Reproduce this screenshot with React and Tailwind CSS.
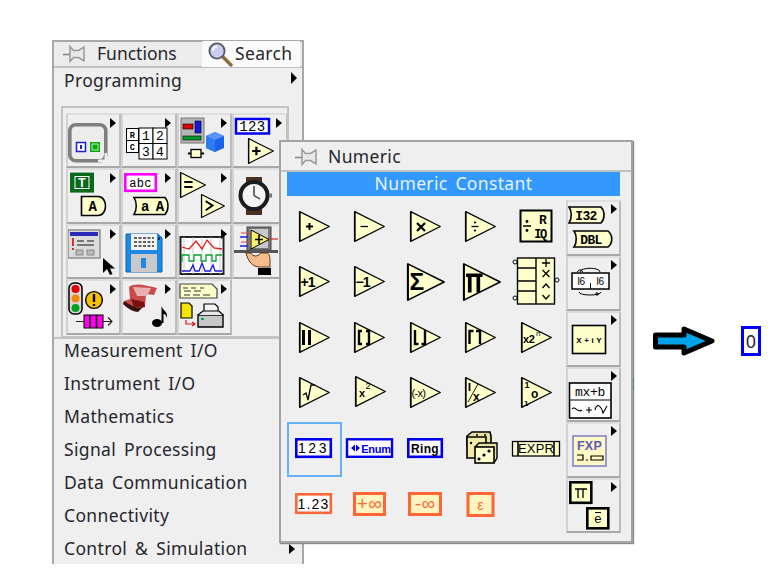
const Y = "#ffffcc";
const K = "#000";
const SANS = "'Liberation Sans', sans-serif";
const MONO = "'Liberation Mono', monospace";

const T = ({ x, y, s = 10, w = 700, f = K, a = "middle", ff = SANS, ls, children }) => (
  <text x={x} y={y} fontSize={s} fontWeight={w} fill={f} textAnchor={a} fontFamily={ff} letterSpacing={ls}>{children}</text>
);

const Pin = () => (
  <svg width="24" height="20" viewBox="0 0 24 20" className="shrink-0">
    <path d="M1 10.5H8" stroke="#8a8a8a" strokeWidth="1.6" />
    <path d="M8 2.5V17.5L11.5 13.5H16.5L22 17V3L16.5 6.5H11.5Z" fill="#e8e8e8" stroke="#9a9a9a" strokeWidth="1.5" />
  </svg>
);

const Glass = () => (
  <svg width="26" height="26" viewBox="0 0 26 26" className="shrink-0">
    <path d="M15 15L24 24" stroke="#8a6a3a" strokeWidth="3.4" strokeLinecap="round" />
    <circle cx="10" cy="10" r="7.6" fill="#c9cdf2" stroke="#55585f" strokeWidth="1.8" />
    <path d="M6 10a4.5 4.5 0 0 1 4-4.5" stroke="#fff" strokeWidth="2" fill="none" />
  </svg>
);

const Tri = ({ x = 12, y = 11, size = 31, children }) => (
  <g transform={`translate(${x} ${y}) scale(${size / 31})`}>
    <path d="M0.7 0.7V30.3L30.3 15.5Z" fill={Y} stroke={K} strokeWidth="1.3" strokeLinejoin="round" />
    <path d="M0.7 0.7V30.3" stroke={K} strokeWidth="1.6" />
    {children}
  </g>
);

const Sub = ({ x = 44, y = 5 }) => <path d={`M${x} ${y}L${x + 6} ${y + 5}L${x} ${y + 10}Z`} fill={K} />;

const Svg = ({ children }) => (
  <svg width="55" height="55" viewBox="0 0 55 55" className="block">{children}</svg>
);

/* ---------- left palette icons ---------- */
const leftIcons = [
  <>
    <rect x="3.8" y="11.8" width="36" height="36" rx="6" fill="#ececec" stroke="#7f7f7f" strokeWidth="3.6" />
    <path d="M39.8 40V47.8H32" stroke="#efefef" strokeWidth="2.5" fill="none" />
    <rect x="10.5" y="29.5" width="9" height="9" fill="#fff" stroke="#1c1cd8" strokeWidth="1.5" />
    <rect x="14" y="32" width="2" height="4" fill="#1c1cd8" />
    <rect x="24" y="29" width="10" height="10" fill="#10a810" />
    <path d="M26 31h6v6h-6z" fill="none" stroke="#b8f0b8" strokeWidth="1" />
  </>,
  <>
    <rect x="5.5" y="15.5" width="12" height="24" fill="#fff" stroke={K} />
    <path d="M5.5 27.5H17.5" stroke={K} />
    <T x="11.5" y="25" s="8.5" ff={MONO}>R</T>
    <T x="11.5" y="37" s="8.5" ff={MONO}>C</T>
    <rect x="18" y="15" width="14" height="15.5" fill="#fff" stroke={K} />
    <rect x="32" y="15" width="14" height="15.5" fill="#fff" stroke={K} />
    <rect x="18" y="30.5" width="14" height="15.5" fill="#fff" stroke={K} />
    <rect x="32" y="30.5" width="14" height="15.5" fill="#fff" stroke={K} />
    <T x="25" y="27" s="13" w="400" ff={MONO}>1</T>
    <T x="39" y="27" s="13" w="400" ff={MONO}>2</T>
    <T x="25" y="43" s="13" w="400" ff={MONO}>3</T>
    <T x="39" y="43" s="13" w="400" ff={MONO}>4</T>
  </>,
  <>
    <rect x="4" y="5" width="23" height="25" fill="#b6b6b6" stroke="#777" />
    <rect x="6" y="11" width="10" height="5" fill="#e00000" stroke={K} strokeWidth=".6" />
    <rect x="18" y="8" width="6" height="12" fill="#1818e0" stroke={K} strokeWidth=".6" />
    <rect x="6" y="23" width="18" height="4" fill="#0a9c2a" stroke={K} strokeWidth=".6" />
    <path d="M29 23L38 19L47 23V35L38 39L29 35Z" fill="#1a63e8" />
    <path d="M29 23L38 27L47 23L38 19Z" fill="#5a93f6" />
    <path d="M38 27V39L29 35V23Z" fill="#2f7cf2" />
    <rect x="14" y="36.5" width="10" height="8" fill={Y} stroke={K} strokeWidth="1.3" />
    <path d="M11 40.5H14M24 40.5H27" stroke={K} strokeWidth="2" />
  </>,
  <>
    <rect x="4" y="6" width="33" height="14.5" fill="#fff" stroke="#0000f0" strokeWidth="2.5" />
    <T x="20.5" y="18" s="14" w="400" ff={MONO}>123</T>
    <Tri x={16} y={25} size={26}>
      <path d="M5 15.5H15M10 10.5V20.5" stroke={K} strokeWidth="2.6" />
    </Tri>
  </>,
  <>
    <rect x="4" y="4.6" width="24" height="20" fill="#0a6a1c" />
    <rect x="9" y="8.5" width="14" height="12" fill="#0a6a1c" stroke="#fff" strokeWidth="1" />
    <T x="16" y="19" s="12" f="#fff">T</T>
    <path d="M15.5 28.5H32C42 28.5 42 47.5 32 47.5H15.5Z" fill={Y} stroke={K} strokeWidth="1.6" />
    <T x="27" y="43" s="14" ff={MONO}>A</T>
  </>,
  <>
    <rect x="4.3" y="6.3" width="30.5" height="16.5" fill="#fff" stroke="#ff00ff" strokeWidth="2.6" />
    <T x="19.5" y="19" s="12" w="400" ff={MONO}>abc</T>
    <path d="M13 29.5H44C48 34 48 42 44 46.5H13C16 42 16 34 13 29.5Z" fill={Y} stroke={K} strokeWidth="1.5" />
    <T x="31" y="43" s="14" ff={MONO} ls="-1">a A</T>
  </>,
  <>
    <Tri x={3} y={4} size={26}>
      <path d="M5 12H15M5 18H15" stroke={K} strokeWidth="2.4" />
    </Tri>
    <Tri x={24} y={26} size={24}>
      <path d="M6 9L15 15L6 21" stroke={K} strokeWidth="2.4" fill="none" />
    </Tri>
  </>,
  <>
    <rect x="14" y="9" width="16" height="9" fill="#4a3020" />
    <rect x="14" y="38" width="16" height="9" fill="#4a3020" />
    <circle cx="22" cy="27.5" r="13.5" fill="#f4f4f4" stroke="#1c1c1c" strokeWidth="4" />
    <path d="M22 27.5V18M22 27.5L28 31" stroke="#333" strokeWidth="1.4" />
    <path d="M37 25.5H40V29.5H37Z" fill="#777" />
  </>,
  <>
    <rect x="2" y="6" width="32" height="28" fill="#dcdcdc" stroke="#888" strokeWidth="1.4" />
    <rect x="4" y="8" width="28" height="4" fill="#2a2ab8" />
    <path d="M7 14V22M7 24V26" stroke="#e00000" strokeWidth="1.6" />
    <path d="M11 17H18M21 17H28M11 21H28" stroke="#555" strokeWidth="1.4" />
    <rect x="10" y="26" width="7" height="5" fill="#bcbcbc" stroke="#777" strokeWidth=".8" />
    <rect x="21" y="26" width="7" height="5" fill="#bcbcbc" stroke="#777" strokeWidth=".8" />
    <path d="M37 34V49L41 45L44 51L46.5 50L44 44.5H49Z" fill={K} />
  </>,
  <>
    <path d="M5 10H37L41 14V48H5Z" fill="#1e88e5" stroke="#1060b0" strokeWidth="1" />
    <rect x="10" y="10" width="26" height="16" fill="#f2f2f2" />
    <path d="M13 14H33M13 18H33M13 22H33" stroke="#333" strokeWidth="1.5" strokeDasharray="3 1.5" />
    <rect x="10" y="30" width="26" height="18" fill="#c9c9c9" />
    <rect x="20" y="34" width="5" height="10" fill="#1e88e5" />
    <rect x="37" y="13" width="2" height="3" fill="#0b2e80" />
  </>,
  <>
    <rect x="3.5" y="13" width="43" height="37" fill="#fff" stroke="#222" strokeWidth="2" />
    <path d="M7 13V50M16 13V50M25 13V50M34 13V50M43 13V50" stroke="#bbb" strokeWidth=".8" />
    <path d="M5 23L12 25L19 17L25 25L30 16L37 24L45 25" stroke="#e81818" strokeWidth="1.3" fill="none" />
    <path d="M5 38V31H12V37H17V31H24V37H29V31H35V37H39V31H45" stroke="#08a030" strokeWidth="1.3" fill="none" />
    <path d="M5 47H13L16 41L18 47H22L25 39L28 47H33L36 41L38 47H45" stroke="#1818e0" strokeWidth="1.3" fill="none" />
  </>,
  <>
    <rect x="15" y="3" width="24" height="23" fill="#777" stroke="#444" />
    <rect x="18" y="5" width="18" height="19" fill="#c9c9c9" />
    <path d="M19 6V25L37 15.5Z" fill="#f8f06a" stroke={K} strokeWidth="1" />
    <path d="M23 15.5H31M27 11V20" stroke={K} strokeWidth="1.6" />
    <path d="M9 9H17M9 18H17" stroke="#e04040" strokeWidth="1" />
    <path d="M8 13H16M8 22H16" stroke="#2020e0" strokeWidth="1.4" />
    <path d="M38 15H46" stroke="#e02020" strokeWidth="1.2" />
    <rect x="1" y="26" width="45" height="3" fill="#555" />
    <path d="M14 29C16 37 20 43 28 43H38L38 36C38 32 37 29 34 29H29C25 33 21 33 19 29Z" fill="#f4bd8a" stroke="#5a3a20" strokeWidth="1" />
    <rect x="26" y="44" width="13" height="7" fill={K} />
  </>,
  <>
    <rect x="3" y="4" width="13" height="31" rx="5" fill="#d8d8d8" stroke={K} strokeWidth="1.5" />
    <circle cx="9.5" cy="10" r="4" fill="#e00000" />
    <circle cx="9.5" cy="19.5" r="4" fill="#f08a00" />
    <circle cx="9.5" cy="29" r="4" fill="#00a020" />
    <circle cx="28" cy="21" r="8.4" fill="#f8c000" stroke={K} strokeWidth="1.4" />
    <path d="M28 15V23M28 25V27" stroke={K} strokeWidth="2.4" />
    <path d="M10 42.5H18M37 42.5H46M42 38.5L46 42.5L42 46.5" stroke="#222" strokeWidth="1.2" fill="none" />
    <rect x="18" y="36" width="19" height="13" fill="#ff00ee" stroke={K} />
    <path d="M24 36V49M30.5 36V49" stroke={K} strokeWidth="1.5" />
  </>,
  <>
    <path d="M8 8C15 3 25 7 36 9L33 16L25 15L24 28L14 31L3 22L9 20Z" fill="#c84a4a" />
    <path d="M3 22C10 26 14 30 22 28L17 33C12 33 6 29 2 25Z" fill="#3a1010" />
    <path d="M10 20L23 23L24 28L13 28Z" fill="#7a1010" />
    <path d="M12 8L30 9L26 17L16 17Z" fill="#e8b0b0" />
    <ellipse cx="36" cy="44" rx="5" ry="4" fill={K} />
    <path d="M40.5 44V27C42 32 47 32 46 39C45 35 43 35 42.5 35V44Z" fill={K} />
  </>,
  <>
    <path d="M3 5H35L40 10V19H3Z" fill={Y} stroke="#444" strokeWidth="1.2" />
    <path d="M6 9H11M14 9H19M23 9H27M7 12H14M17 12H24M7 16H13M16 16H23M26 16H33" stroke="#333" strokeWidth="1.2" />
    <path d="M4 24H12L15 27V39H4Z" fill="#f4e400" stroke={K} strokeWidth="1.2" />
    <path d="M9 41V45H18M15 43L18 45L15 47" stroke="#e01010" strokeWidth="1.2" fill="none" />
    <path d="M27 25H38L41 28V36H27Z" fill="#f4f4f4" stroke={K} strokeWidth="1.2" />
    <path d="M21 36H46V48H21Z" fill="#c8c8c8" stroke={K} strokeWidth="1.4" />
    <path d="M21 36L26 32H42L46 36" fill="#e8e8e8" stroke={K} strokeWidth="1.2" />
    <rect x="24" y="39" width="3" height="2" fill="#00b050" />
  </>,
];

const leftArrowX = [44, 44, 44, 44, 44, 44, 44, null, 44, 44, 44, null, 44, 44, 44];

/* ---------- numeric palette icons ---------- */
const Wire = ({ color, x, y, w, h, t = 2.6, fill = "#fff", children }) => (
  <>
    <rect x={x} y={y} width={w} height={h} fill={fill} stroke={color} strokeWidth={t} />
    {children}
  </>
);
const OR = "#ff6633";
const OF = "#fff5c0";

const numericIcons = [
  <Svg><Tri><path d="M7 15.5H14M10.5 12V19" stroke={K} strokeWidth="2" /></Tri></Svg>,
  <Svg><Tri><path d="M6.6 15.5H14" stroke={K} strokeWidth="1.3" /></Tri></Svg>,
  <Svg><Tri><path d="M7 12L15 20M15 12L7 20" stroke={K} strokeWidth="2.2" /></Tri></Svg>,
  <Svg><Tri><path d="M6.5 15.5H13.5" stroke={K} strokeWidth="1.3" /><circle cx="10" cy="11.5" r="1.1" /><circle cx="10" cy="19.5" r="1.1" /></Tri></Svg>,
  <Svg>
    <rect x="11.5" y="10.5" width="31" height="31" fill={Y} stroke={K} strokeWidth="2" />
    <T x="34" y="24" s="13" ff={MONO}>R</T>
    <T x="31" y="38" s="12" ff={MONO} ls="-1.5">IQ</T>
    <path d="M14 26H22" stroke={K} strokeWidth="1.5" />
    <circle cx="18" cy="21.5" r="1.4" />
    <circle cx="18" cy="30.5" r="1.4" />
  </Svg>,
  <Svg><Tri><T x="1.5" y="20.5" s="14" a="start" ls="-1">+1</T></Tri></Svg>,
  <Svg><Tri><T x="1.5" y="20.5" s="14" a="start" ls="-1">−1</T></Tri></Svg>,
  <Svg><Tri x={9} y={8} size={38}><T x="2" y="22" s="20" a="start">Σ</T></Tri></Svg>,
  <Svg><Tri x={10} y={8} size={38}><path d="M2.5 10H16M5.5 10V24M12.5 10V24" stroke={K} strokeWidth="3" fill="none" /></Tri></Svg>,
  <Svg>
    <rect x="8.5" y="3" width="37" height="46" fill={Y} stroke={K} strokeWidth="1.4" />
    <path d="M27 3V49M8.5 13H27M8.5 26H27M8.5 36H27" stroke={K} strokeWidth="1.4" />
    <circle cx="6" cy="7" r="2" fill="#fff" stroke={K} />
    <circle cx="6" cy="43" r="2" fill="#fff" stroke={K} />
    <circle cx="48" cy="25" r="2" fill="#fff" stroke={K} />
    <path d="M33 8H41M37 4V12M33.5 15L40.5 22M40.5 15L33.5 22M33.5 33L37 29L40.5 33M33.5 40L37 44L40.5 40" stroke={K} strokeWidth="1.3" fill="none" />
  </Svg>,
  <Svg><Tri><path d="M4.5 8V23M10.5 8V23" stroke={K} strokeWidth="3" /></Tri></Svg>,
  <Svg><Tri><path d="M8 9H5V22H8M12 9H15V22H12" stroke={K} strokeWidth="2.4" fill="none" /></Tri></Svg>,
  <Svg><Tri><path d="M5 8V22H8.5M15 8V22H11.5" stroke={K} strokeWidth="2.4" fill="none" /></Tri></Svg>,
  <Svg><Tri><path d="M4.5 22V9H8.5M15 22V9H11" stroke={K} strokeWidth="2.4" fill="none" /></Tri></Svg>,
  <Svg><Tri><T x="2" y="21" s="11" a="start" ls="-.3">x2</T><T x="15" y="14" s="8" a="start" w="400">n</T></Tri></Svg>,
  <Svg><Tri><path d="M4 18L7 16L9 23L12 8H16" stroke={K} strokeWidth="1.3" fill="none" /></Tri></Svg>,
  <Svg><Tri x={13} y={10}><T x="4" y="21" s="11" a="start">x</T><T x="10.5" y="13" s="9" a="start" w="400">2</T></Tri></Svg>,
  <Svg><Tri><T x="1.5" y="20" s="11" w="400" a="start" ls="-.7">(-x)</T></Tri></Svg>,
  <Svg><Tri><path d="M4.5 6V14" stroke={K} strokeWidth="1.8" /><path d="M3 25L13 7" stroke={K} strokeWidth=".9" /><T x="8" y="24" s="12" a="start">x</T></Tri></Svg>,
  <Svg><Tri><T x="3.5" y="10.5" s="9" a="start">1</T><T x="10" y="20.5" s="12" a="start">o</T><T x="3" y="29" s="8" a="start">1</T></Tri></Svg>,
  <Svg>
    <Wire color="#0000f0" x={9.3} y={17.3} w={34.5} h={17.5} t={2.6}>
      <T x="26.5" y="31" s="14" w="400" ls="2.5">123</T>
    </Wire>
  </Svg>,
  <Svg>
    <Wire color="#0000f0" x={5} y={17.3} w={45} h={17.5} t={2.4}>
      <path d="M9 26L13 22.5V29.5ZM18 26L14 22.5V29.5Z" fill="#0000e0" />
      <T x="34" y="30.5" s="11" f="#0000e0" ls="-.3">Enum</T>
    </Wire>
  </Svg>,
  <Svg>
    <Wire color="#0000f0" x={10.3} y={17.3} w={33.5} h={17.5} t={2.6}>
      <T x="27" y="30.5" s="12">Ring</T>
    </Wire>
  </Svg>,
  <Svg>
    <path d="M14 14L19 10H37L38 14V24H14Z" fill="#e8e0a0" stroke={K} strokeWidth="1.6" />
    <path d="M14 15H33V36H14Z" fill="#f2eba8" stroke={K} strokeWidth="1.6" />
    <path d="M22 25L26 21H44V36L41 41" fill="#e8e0a0" stroke={K} strokeWidth="1.4" />
    <rect x="22" y="25" width="19" height="16" fill={Y} stroke={K} strokeWidth="1.6" />
    <circle cx="26" cy="37" r="1.6" /><circle cx="31" cy="33" r="1.6" /><circle cx="36" cy="29" r="1.6" />
    <circle cx="18" cy="21" r="1.2" /><circle cx="24" cy="13" r="1" /><circle cx="32" cy="13" r="1" />
  </Svg>,
  <Svg>
    <rect x="3.5" y="19.5" width="47" height="14.5" fill={Y} stroke={K} strokeWidth="1.3" />
    <path d="M9 19.5V34M45 19.5V34" stroke={K} strokeWidth="1.6" />
    <T x="27" y="31" s="13" w="400" ls=".2">EXPR</T>
  </Svg>,
  <Svg>
    <Wire color={OR} x={9.3} y={17.3} w={34.5} h={18.5} t={2.6}>
      <T x="26.5" y="31.5" s="14" w="400" ls="1.2">1.23</T>
    </Wire>
  </Svg>,
  <Svg>
    <rect x="12.5" y="16.5" width="30" height="21" fill={OF} stroke={OR} strokeWidth="3" />
    <T x="27.5" y="33" s="19" w="400" f={OR}>+∞</T>
  </Svg>,
  <Svg>
    <rect x="11.5" y="16.5" width="31" height="21" fill={OF} stroke={OR} strokeWidth="3" />
    <T x="27" y="33" s="19" w="400" f={OR}>-∞</T>
  </Svg>,
  <Svg>
    <rect x="15" y="16.5" width="25" height="22" fill={OF} stroke={OR} strokeWidth="3" />
    <T x="27.5" y="32.5" s="14" w="400" f={OR}>ε</T>
  </Svg>,
  null,
];

/* ---------- right column of numeric palette ---------- */
const Bevel = ({ children, className = "" }) => (
  <div className={`box-border border-2 border-t-[#dedede] border-l-[#d2d2d2] border-r-[#bcbcbc] border-b-[#a8a8a8] bg-[#efefef] ${className}`}>
    {children}
  </div>
);

const rightIcons = [
  <>
    <path d="M1 5H33C37 9 37 17 33 21H1C4 17 4 9 1 5Z" fill={Y} stroke={K} strokeWidth="1.6" />
    <T x="18" y="18" s="13" ff={MONO} ls="-.6">I32</T>
    <path d="M6 29H40C45 33 45 41 40 45H6C9 41 9 33 6 29Z" fill={Y} stroke={K} strokeWidth="1.6" />
    <T x="23" y="42" s="13" ff={MONO} ls="-.6">DBL</T>
  </>,
  <>
    <path d="M12 14C12 9 32 9 32 14" stroke={K} fill="none" />
    <path d="M9 14L12 11.5L15 14" stroke={K} fill="none" />
    <rect x="4" y="15" width="37" height="16" fill="#fff" stroke={K} strokeWidth="1.5" />
    <path d="M22.5 25V31" stroke={K} />
    <T x="13" y="27" s="10" w="400" ls="-.5">I6</T>
    <T x="32" y="27" s="10" w="400" ls="-.5">I6</T>
    <path d="M11 34C11 38 33 38 33 34M27 36H31M29 34V38" stroke={K} fill="none" />
  </>,
  <>
    <rect x="4.5" y="12.5" width="33" height="28" fill={Y} stroke={K} strokeWidth="1.6" />
    <T x="21" y="30" s="8" w="700" ls=".2">X + i Y</T>
  </>,
  <>
    <rect x="1.5" y="14" width="41.5" height="35" fill="#fff" stroke={K} strokeWidth="1.6" />
    <path d="M1.5 31H43" stroke={K} />
    <T x="22" y="27" s="13" w="400" ff={MONO} ls="-.3">mx+b</T>
    <path d="M4 40C7 36 10 45 14 41M18 41H24M21 38V44M27 41C29 33 33 37 35 44L39 37" stroke={K} strokeWidth="1.1" fill="none" />
  </>,
  <>
    <rect x="5" y="12" width="33" height="30" fill="#fff8c4" stroke="#8484c4" strokeWidth="1.6" />
    <T x="21.5" y="26" s="12.5" f="#5a5ab4" ls=".3">FXP</T>
    <path d="M9 31H15V36H9M18 36H20M23 32H35V36H23Z" stroke={K} strokeWidth="1.2" fill="none" />
  </>,
  <>
    <rect x="2.3" y="2.3" width="21" height="20.5" fill={Y} stroke={K} strokeWidth="2.6" />
    <path d="M7 9H19M10 9V18M15 9V18" stroke={K} strokeWidth="1.3" />
    <rect x="19.3" y="28.3" width="21" height="20" fill={Y} stroke={K} strokeWidth="2.6" />
    <T x="30" y="43" s="13" w="400" ff={MONO}>e</T>
    <path d="M27 32.5H33" stroke={K} />
  </>,
];

const Row = ({ label, arrow }) => (
  <div className="flex h-[33px] items-center justify-between pl-[10px] pr-[7px] [word-spacing:3px]">
    <span>{label}</span>
    {arrow && <span className="block h-0 w-0 border-y-[5px] border-l-[6px] border-y-transparent border-l-black" />}
  </div>
);

export default function App() {
  return (
    <div
      className="relative h-[584px] w-[773px] overflow-hidden bg-white text-[17.5px] leading-none tracking-[0.35px] text-[#26262e]"
      style={{ fontFamily: "'Noto Sans', sans-serif" }}
    >
      {/* Functions palette */}
      <div className="absolute left-[52px] top-[40px] box-border flex h-[524px] w-[252px] flex-col border-x-2 border-t-2 border-[#a8a8a8] bg-[#efefef]">
        <div className="flex h-[26px] items-center justify-between border-b-2 border-[#c0c0c0] bg-[#ececec]">
          <div className="flex items-center gap-[11px] pl-[8px]">
            <Pin />
            <span className="tracking-normal">Functions</span>
          </div>
          <div className="mr-[2px] flex h-[26px] w-[98px] items-center gap-[2px] bg-[#fbfbfb] pl-[5px]">
            <Glass />
            <span>Search</span>
          </div>
        </div>
        <div className="flex h-[26px] shrink-0 items-start justify-between pl-[10px] pr-[5px] pt-[4px]">
          <span>Programming</span>
          <span className="mt-0 block h-0 w-0 border-y-[6px] border-l-[6px] border-y-transparent border-l-black" />
        </div>
        <div className="ml-[7px] mt-[12px] box-border h-[232px] w-[228px] shrink-0 overflow-hidden border-2 border-[#c4c4c4] px-[3px] py-[5px]">
          <div className="grid grid-cols-[repeat(4,55.4px)] auto-rows-[55.4px]">
            {leftIcons.map((icon, i) => (
              <Bevel key={i}>
                <svg width="51" height="51" viewBox="2 2 51 51" className="block">
                  {icon}
                  {leftArrowX[i] && <Sub />}
                </svg>
              </Bevel>
            ))}
          </div>
        </div>
        <div className="mt-[-1px] border-t-2 border-[#c4c4c4]">
          <div className="mt-[-5px] flex flex-col">
            <Row label="Measurement I/O" />
            <Row label="Instrument I/O" />
            <Row label="Mathematics" />
            <Row label="Signal Processing" />
            <Row label="Data Communication" />
            <Row label="Connectivity" />
            <Row label="Control & Simulation" arrow />
          </div>
        </div>
      </div>

      {/* Numeric palette */}
      <div className="absolute left-[279px] top-[140px] box-border h-[403px] w-[354px] border-2 border-[#a4a4a4] bg-[#efefef] shadow-[1px_1px_1px_#8a8a8a]">
        <div className="flex h-[30px] items-center gap-[10px] border-b-2 border-[#c0c0c0] pl-[13px] pt-[1px]">
          <Pin />
          <span>Numeric</span>
        </div>
        <div className="ml-[6px] flex h-[24px] w-[333px] items-center justify-center bg-[#3399ff] text-[#e8f2ff] [word-spacing:3px]">
          Numeric Constant
        </div>
        <div className="ml-[6px] mt-[4px] flex">
          <div className="grid grid-cols-[repeat(5,55.4px)] auto-rows-[55.4px]">
            {numericIcons.map((icon, i) => (
              <div key={i} className={i === 20 ? "ring-2 ring-inset ring-[#66b2f5]" : ""}>
                {icon}
              </div>
            ))}
          </div>
          <div className="ml-[2px] grid w-[55px] auto-rows-[55.5px]">
            {rightIcons.map((icon, i) => (
              <Bevel key={i}>
                <svg width="51" height="51" viewBox="0 0 51 51" className="block">
                  {icon}
                  <Sub x={43} y={2} />
                </svg>
              </Bevel>
            ))}
          </div>
        </div>
      </div>

      {/* Stray mark at the palette's edge */}
      <div className="absolute left-[633px] top-[378px] h-[12px] w-[1px] bg-[#3a8088]" />

      {/* Result arrow */}
      <svg width="66" height="34" viewBox="0 0 66 34" className="absolute left-[652px] top-[325px]">
        <path d="M3.5 10H32V4L60 16L32 28V22H3.5Z" fill="#00a2e8" stroke="#000" strokeWidth="5" strokeLinejoin="round" />
      </svg>

      {/* Numeric constant */}
      <div className="absolute left-[741px] top-[326px] box-border flex h-[30px] w-[20px] items-center justify-center border-[3px] border-[#0000ff] bg-white text-[18px]">
        0
      </div>
    </div>
  );
}
